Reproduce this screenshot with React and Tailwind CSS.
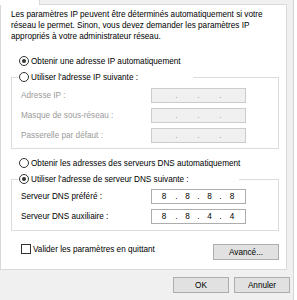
const Radio = ({ checked }) => (
  <span className="w-[10px] h-[10px] rounded-full border border-[#333333] bg-white flex items-center justify-center shrink-0">
    {checked && <span className="w-[4px] h-[4px] rounded-full bg-[#333333]" />}
  </span>
)

const IpField = ({ values, disabled }) => {
  const v = values || ["", "", "", ""]
  return (
    <div className={disabled
      ? "w-[95px] h-[15px] border border-[#cccccc] bg-[#f0f0f0] text-[#a0a0a0] flex items-center"
      : "w-[95px] h-[15px] border border-[#adadad] bg-white text-black flex items-center"}>
      <span className="w-[24px] text-center">{v[0]}</span>
      <span className="w-[1px] flex justify-center">.</span>
      <span className="w-[21px] text-center">{v[1]}</span>
      <span className="w-[1px] flex justify-center">.</span>
      <span className="w-[21px] text-center">{v[2]}</span>
      <span className="w-[1px] flex justify-center">.</span>
      <span className="w-[22px] text-center">{v[3]}</span>
    </div>
  )
}

const Row = ({ label, values, disabled }) => (
  <div className="flex items-center h-[15px]">
    <span className={disabled ? "w-[133px] pl-[3px] text-[#9a9a9a]" : "w-[133px] pl-[3px]"}>{label}</span>
    <IpField values={values} disabled={disabled} />
  </div>
)

const Button = ({ children, className }) => (
  <button className={"h-[16px] bg-[#e1e1e1] border border-[#adadad] flex items-center justify-center text-black " + className}>
    {children}
  </button>
)

export default function App() {
  return (
    <div className="w-[297px] h-[300px] bg-white flex overflow-hidden font-['Liberation_Sans',Arial,sans-serif] text-[8.2px] leading-[11px] text-black">
      <div className="w-[294px] h-full bg-[#f0f0f0] border-r border-[#d4d4d4] flex flex-col">
        {/* onglets */}
        <div className="h-[5px] flex shrink-0">
          <div className="w-[40px] bg-white border-r border-[#d9d9d9]" />
          <div className="w-[247px] border-b border-[#d9d9d9]" />
        </div>

        {/* page */}
        <div className="w-[287px] h-[265px] shrink-0 bg-white border-l border-r border-b border-[#d9d9d9] flex flex-col px-[10px]">
          <p className="mt-[4px] whitespace-nowrap">
            Les paramètres IP peuvent être déterminés automatiquement si votre<br />
            réseau le permet. Sinon, vous devez demander les paramètres IP<br />
            appropriés à votre administrateur réseau.
          </p>

          <div className="mt-[13px] h-[12px] flex items-center gap-[2px] ml-[8px]">
            <Radio checked />
            <span>Obtenir une adresse IP automatiquement</span>
          </div>

          <fieldset className="mt-[4px] w-[268px] border border-[#dcdcdc] px-[6px] pt-[5px] pb-[5px] flex flex-col gap-[5px]">
            <legend className="w-[175px] h-[12px] pl-[1px] bg-white">
              <span className="h-[12px] flex items-center gap-[2px]">
                <Radio />
                <span>Utiliser l'adresse IP suivante :</span>
              </span>
            </legend>
            <Row label="Adresse IP :" disabled />
            <Row label="Masque de sous-réseau :" disabled />
            <Row label="Passerelle par défaut :" disabled />
          </fieldset>

          <div className="mt-[8px] h-[12px] flex items-center gap-[2px] ml-[8px]">
            <Radio />
            <span>Obtenir les adresses des serveurs DNS automatiquement</span>
          </div>

          <fieldset className="mt-[4px] w-[268px] border border-[#dcdcdc] px-[6px] pt-[4px] pb-[6px] flex flex-col gap-[5px]">
            <legend className="w-[221px] h-[12px] pl-[1px] bg-white">
              <span className="h-[12px] flex items-center gap-[2px]">
                <Radio checked />
                <span>Utiliser l'adresse de serveur DNS suivante :</span>
              </span>
            </legend>
            <Row label="Serveur DNS préféré :" values={["8", "8", "8", "8"]} />
            <Row label="Serveur DNS auxiliaire :" values={["8", "8", "4", "4"]} />
          </fieldset>

          <div className="mt-[13px] w-[268px] flex items-start justify-between">
            <div className="ml-[10px] h-[10px] flex items-center gap-[2px]">
              <span className="w-[10px] h-[10px] border border-[#333333] bg-white shrink-0" />
              <span>Valider les paramètres en quittant</span>
            </div>
            <Button className="w-[66px]">Avancé...</Button>
          </div>
        </div>

        {/* boutons */}
        <div className="mt-[7px] flex justify-end gap-[5px] pr-[3px]">
          <Button className="w-[56px]">OK</Button>
          <Button className="w-[56px]">Annuler</Button>
        </div>
      </div>
    </div>
  )
}
